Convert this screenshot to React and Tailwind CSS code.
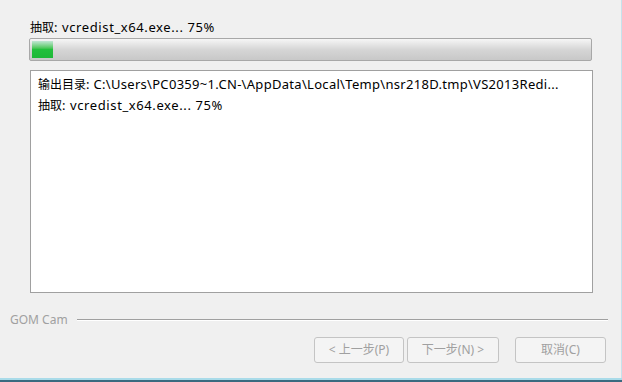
export default function App() {
  const font = { fontFamily: '"Noto Sans", "Noto Sans CJK SC", sans-serif' };
  const C = ({ children }) => <span className="text-[12px] tracking-normal">{children}</span>;
  return (
    <div className="w-[622px] h-[382px] bg-[#f0f0f0] flex flex-col overflow-hidden text-[13px] text-black" style={font}>
      <div className="flex flex-col flex-1 border-r border-[#c6e2ec]">
        <div className="pl-[30px] pt-[19px] h-[38px] leading-[16px] tracking-[0.6px]"><C>抽取</C>: vcredist_x64.exe... 75%</div>
        <div className="ml-[29px] w-[563px] h-[23px] border border-[#a8a8a8] rounded-[2px] bg-gradient-to-b from-[#f6f6f6] via-[#d6d6d6] to-[#c8c8c8] p-[2px] flex">
          <div className="w-[21px] h-full bg-gradient-to-b from-[#bfe6d4] via-[#22c03c] to-[#1eb838]" />
        </div>
        <div className="ml-[30px] mt-[9px] w-[563px] h-[223px] bg-white border border-[#a0a0a0] pl-[7px] pt-[3px] leading-[20px]">
          <div className="tracking-[0.3px]"><C>输出目录</C>: C:\Users\PC0359~1.CN-\AppData\Local\Temp\nsr218D.tmp\VS2013Redi...</div>
          <div className="tracking-[0.6px]"><C>抽取</C>: vcredist_x64.exe... 75%</div>
        </div>
        <div className="flex items-center pl-[10px] pr-[13px] mt-[19px] h-[16px] text-[12px]">
          <span className="text-[#a0a0a0] leading-[16px]">GOM Cam</span>
          <div className="flex-1 ml-[9px] border-t border-[#a0a0a0] border-b border-b-white" />
        </div>
        <div className="flex pl-[314px] mt-[9px] h-[26px] text-[#a0a0a0] text-[12px]">
          <div className="w-[90px] h-[26px] border border-[#c4c4c4] rounded-[3px] bg-[#f4f4f4] flex items-center justify-center">&lt; 上一步(P)</div>
          <div className="w-[92px] ml-[3px] h-[26px] border border-[#c4c4c4] rounded-[3px] bg-[#f4f4f4] flex items-center justify-center">下一步(N) &gt;</div>
          <div className="w-[91px] ml-[16px] h-[26px] border border-[#c4c4c4] rounded-[3px] bg-[#f4f4f4] flex items-center justify-center">取消(C)</div>
        </div>
        <div className="flex-1" />
      </div>
      <div className="h-[2px] bg-[#a9dbe9]" />
      <div className="h-[2px] bg-[#3a6a80]" />
    </div>
  );
}
